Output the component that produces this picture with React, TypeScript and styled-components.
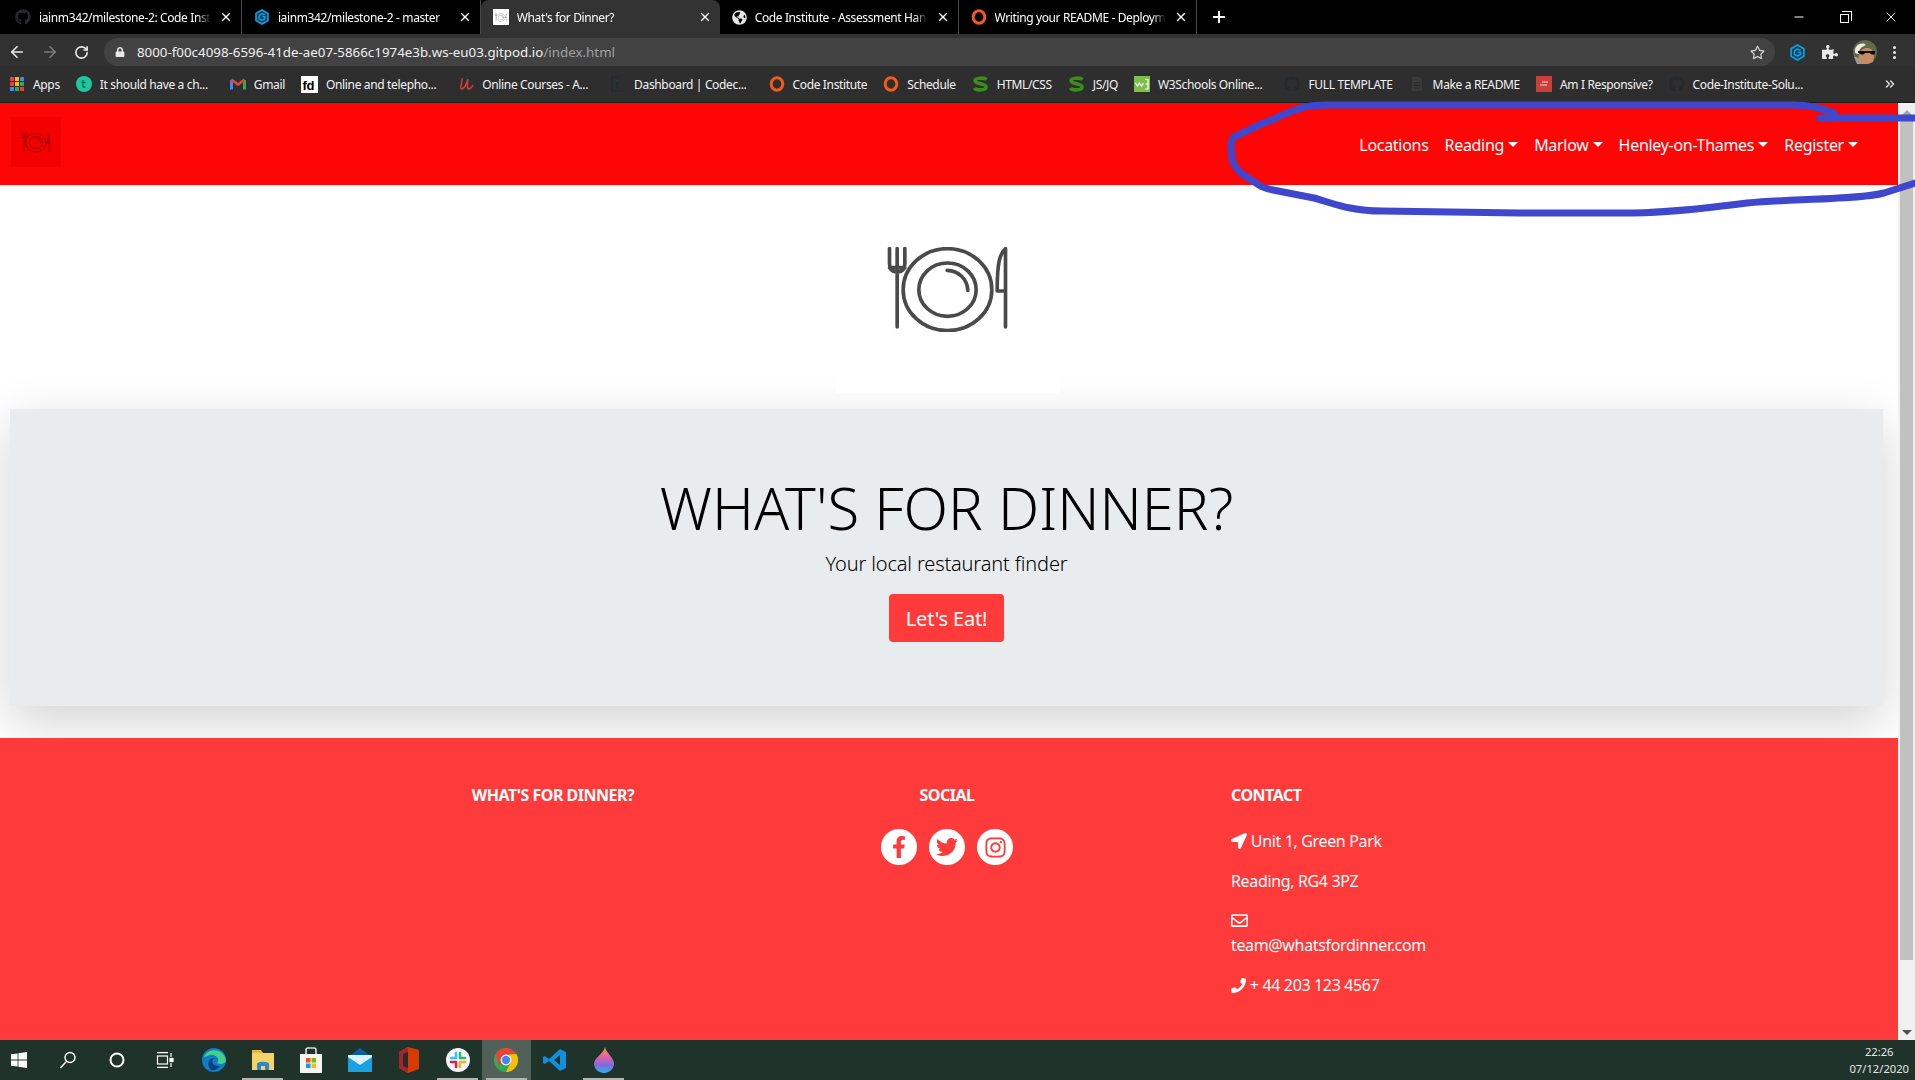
import styled, { createGlobalStyle } from 'styled-components';
import {
  FaFacebookF,
  FaTwitter,
  FaInstagram,
  FaLocationArrow,
  FaRegEnvelope,
  FaPhone,
  FaGithub,
  FaGlobeAmericas,
  FaPuzzlePiece,
  FaLock,
  FaRegStar,
} from 'react-icons/fa';
import { ArrowLeft, ArrowRight, RotateCw, Plus, X, Minus, ChevronsRight } from 'lucide-react';

const GlobalStyle = createGlobalStyle`
  html, body {
    margin: 0;
    height: 1080px;
    overflow: hidden;
    background: #fff;
    font-family: "Noto Sans", "Open Sans", sans-serif;
  }
  * { box-sizing: border-box; }
`;

const PlateIcon = ({ width, height, color }: { width: number; height: number; color: string }) => (
  <svg width={width} height={height} viewBox="140 80 365 255" fill="none" stroke={color} strokeWidth="11" strokeLinecap="round">
    <path d="M147 85V130Q147 155 170 155Q193 155 193 130V85M170 85V320M147 142H193" />
    <ellipse cx="321" cy="208" rx="133" ry="123" />
    <ellipse cx="321" cy="208" rx="86" ry="80" />
    <path d="M320 150C355 152 380 175 382 210" />
    <path d="M495 320V85C478 100 470 125 470 212H495" strokeLinejoin="round" />
  </svg>
);

const GitpodIcon = ({ size }: { size: number }) => (
  <svg width={size} height={size} viewBox="0 0 16 16" fill="none">
    <path d="M8 1L14 4.5V11.5L8 15L2 11.5V4.5Z" fill="#0b3c57" stroke="#12a0e0" strokeWidth="1.6" />
    <path d="M10.8 5.6L7.4 4.8L5 7V9.6L8 11.3L10.8 9.8V7.8H8.2" stroke="#12a0e0" strokeWidth="1.5" />
  </svg>
);

const RingIcon = () => (
  <svg width="16" height="16" viewBox="0 0 16 16" fill="none">
    <ellipse cx="8" cy="8" rx="5.8" ry="6.2" stroke="#f0591f" strokeWidth="3" />
  </svg>
);

const LetterSIcon = () => (
  <svg width="17" height="16" viewBox="0 0 16 16" fill="none">
    <path d="M14 3.6C12 1.6 2.6 1.4 2.6 4.8C2.6 8.4 13.6 7.2 13.6 11C13.6 14.6 3.6 14.6 1.8 12" stroke="#3b8d17" strokeWidth="3.6" />
  </svg>
);

const AppsIcon = () => (
  <svg width="16" height="16" viewBox="0 0 16 16">
    {['#e94235', '#fbbc04', '#4285f4', '#e94235', '#fbbc04', '#34a853', '#4285f4', '#34a853', '#e94235'].map((c, i) => (
      <rect key={i} x={1 + (i % 3) * 5} y={1 + Math.floor(i / 3) * 5} width="4" height="4" fill={c} />
    ))}
  </svg>
);

const GrammarlyIcon = () => (
  <svg width="16" height="16" viewBox="0 0 16 16">
    <circle cx="8" cy="8" r="8" fill="#1fc7a0" />
    <path d="M7 4V10.5Q7 11.5 9.5 11M5.5 6.5H9.5" stroke="#0b6a55" strokeWidth="1.3" fill="none" />
  </svg>
);

const GmailIcon = () => (
  <svg width="16" height="16" viewBox="0 0 16 16" fill="none">
    <path d="M1.5 13.5V4" stroke="#4285f4" strokeWidth="3" />
    <path d="M14.5 13.5V4" stroke="#34a853" strokeWidth="3" />
    <path d="M1.5 3.5L8 8.6L14.5 3.5" stroke="#ea4335" strokeWidth="2.6" />
  </svg>
);

const FdIcon = () => (
  <svg width="17" height="17" viewBox="0 0 17 17">
    <rect width="17" height="17" fill="#fff" />
    <text x="1.5" y="14" fontSize="13" fontWeight="700" fontFamily="Liberation Sans" fill="#000">fd</text>
  </svg>
);

const UdemyIcon = () => (
  <svg width="16" height="16" viewBox="0 0 16 16" fill="none">
    <path d="M4 2C5 6 1 12 3.5 13C6 13.5 9 7 10 3C9 8 9 13 11 13C12.5 13 14 11 15 9" stroke="#c8403f" strokeWidth="1.6" />
  </svg>
);

const CodecademyIcon = () => (
  <svg width="16" height="16" viewBox="0 0 16 16" fill="none">
    <path d="M11 1H2V15H14" stroke="#1c2a38" strokeWidth="1.2" />
    <path d="M10 6.5H7V11H10" stroke="#1c2a38" strokeWidth="1.2" />
  </svg>
);

const W3Icon = () => (
  <svg width="16" height="16" viewBox="0 0 16 16">
    <rect width="16" height="16" fill="#7cbf4a" />
    <path d="M1.5 7L3.5 10L5.5 7L7.5 10L9.5 7" stroke="#fff" strokeWidth="1.2" fill="none" />
    <path d="M11 3.5H14V13H11M11.5 8H14" stroke="#fff" strokeWidth="1.2" fill="none" />
  </svg>
);

const DocIcon = () => (
  <svg width="16" height="16" viewBox="0 0 16 16">
    <path d="M3 1H10L13 4V15H3Z" fill="#3a3a3a" />
    <path d="M5 7H11M5 9.5H11M5 12H11" stroke="#2a2a2a" />
  </svg>
);

const ResponsiveIcon = () => (
  <svg width="16" height="16" viewBox="0 0 16 16">
    <rect width="16" height="16" fill="#c9403a" />
    <path d="M6 6H12M4 9H11" stroke="#f6d0ce" />
  </svg>
);

const AvatarIcon = () => (
  <svg width="24" height="24" viewBox="0 0 24 24">
    <circle cx="12" cy="12" r="12" fill="#5f6b46" />
    <path d="M6 24C4 16 7 8 14 8C21 8 22 16 20 22L15 24Z" fill="#c58a66" />
    <path d="M2 12C1 7 6 2 12 4C14 5 10 6 8 8C6 10 6 12 6 14C3 14 2 13 2 12Z" fill="#ece8df" />
    <path d="M5 11H22V13C22 15 18 15 17 13H12C11 15 7 15 6.5 13H5Z" fill="#0d0d0d" />
    <path d="M1 17C4 16 7 20 8 24H4Z" fill="#9a9a9a" />
  </svg>
);

const WindowsIcon = () => (
  <svg width="16" height="16" viewBox="0 0 16 16" fill="#fff">
    <path d="M0 2.3L6.6 1.4V7.6H0ZM7.4 1.3L16 0V7.6H7.4ZM0 8.4H6.6V14.6L0 13.7ZM7.4 8.4H16V16L7.4 14.7Z" />
  </svg>
);

const SearchGlassIcon = () => (
  <svg width="18" height="18" viewBox="0 0 18 18" fill="none" stroke="#fff" strokeWidth="1.4">
    <circle cx="11" cy="6.5" r="5" />
    <path d="M7.6 10.2L1.4 17" />
  </svg>
);

const CortanaIcon = () => (
  <svg width="16" height="16" viewBox="0 0 16 16" fill="none">
    <circle cx="8" cy="8" r="6.5" stroke="#fff" strokeWidth="2" />
  </svg>
);

const TaskViewIcon = () => (
  <svg width="18" height="16" viewBox="0 0 18 16" fill="none" stroke="#fff" strokeWidth="1.2">
    <path d="M1 .6H12M1 15.4H12" />
    <rect x="1.5" y="4" width="10" height="8" />
    <path d="M15 1V5M15 11V15" />
    <rect x="14" y="6.5" width="3" height="3" fill="#fff" />
  </svg>
);

const EdgeIcon = () => (
  <svg width="24" height="24" viewBox="0 0 24 24">
    <circle cx="12" cy="12" r="12" fill="#0f7ec4" />
    <path d="M2 9C5 0 21 -1 24 12C24 16 18 17 15 15C19 11 13 6 8 7C5 8 3 9 2 9Z" fill="#41d18b" />
    <path d="M9 22C3 16 8 9 13 10C8 12 10 19 18 18C16 21 12 23 9 22Z" fill="#0a3f7d" />
  </svg>
);

const FolderIcon = () => (
  <svg width="24" height="24" viewBox="0 0 24 24">
    <path d="M1 2H10L12 5H23V22H1Z" fill="#e8b33f" />
    <rect x="1" y="5" width="22" height="17" fill="#f6d365" />
    <path d="M6 22V16C6 13 18 13 18 16V22H14V18H10V22Z" fill="#2a87d4" />
  </svg>
);

const StoreIcon = () => (
  <svg width="24" height="26" viewBox="0 0 24 26">
    <path d="M7 7V3Q7 1 9 1H15Q17 1 17 3V7" fill="none" stroke="#ddd" strokeWidth="1.6" />
    <rect x="1" y="7" width="22" height="19" fill="#f5f5f5" />
    <rect x="7" y="11" width="4.5" height="4.5" fill="#f25022" />
    <rect x="12.5" y="11" width="4.5" height="4.5" fill="#7fba00" />
    <rect x="7" y="16.5" width="4.5" height="4.5" fill="#00a4ef" />
    <rect x="12.5" y="16.5" width="4.5" height="4.5" fill="#ffb900" />
  </svg>
);

const MailIcon = () => (
  <svg width="24" height="24" viewBox="0 0 24 24">
    <path d="M0 9L12 0L24 9Z" fill="#0a5ea8" />
    <rect y="9" width="24" height="15" fill="#1ba1e2" />
    <path d="M0 9L12 17L24 9V7H0Z" fill="#d9f1fb" />
  </svg>
);

const OfficeIcon = () => (
  <svg width="20" height="26" viewBox="0 0 20 26">
    <path d="M9 0L20 3V22L9 26L0 21V5Z" fill="#d83b01" />
    <path d="M9 0V26L0 21V5Z" fill="#a4262c" />
    <path d="M4 7L9 5V21L4 19Z" fill="#2a2a2a" />
  </svg>
);

const SlackIcon = () => (
  <svg width="24" height="24" viewBox="0 0 24 24">
    <circle cx="12" cy="12" r="12" fill="#f5f5f5" />
    <path d="M10 5V10M5 10H10" stroke="#36c5f0" strokeWidth="2.6" strokeLinecap="round" />
    <path d="M14 5V10M19 10H14" stroke="#2eb67d" strokeWidth="2.6" strokeLinecap="round" />
    <path d="M14 19V14M19 14H14" stroke="#ecb22e" strokeWidth="2.6" strokeLinecap="round" />
    <path d="M10 19V14M5 14H10" stroke="#e01e5a" strokeWidth="2.6" strokeLinecap="round" />
  </svg>
);

const ChromeIcon = () => (
  <svg width="24" height="24" viewBox="0 0 24 24">
    <circle cx="12" cy="12" r="12" fill="#34a853" />
    <path d="M12 0A12 12 0 0 1 22.4 6H12L5 4Z" fill="#ea4335" />
    <path d="M1.6 6A12 12 0 0 1 12 0L16 8L8 14L5 18Z" fill="#ea4335" />
    <path d="M22.4 6A12 12 0 0 1 12 24L17 14L12 7Z" fill="#fbbc04" />
    <circle cx="12" cy="12" r="5.4" fill="#fff" />
    <circle cx="12" cy="12" r="4.2" fill="#4285f4" />
  </svg>
);

const VsCodeIcon = () => (
  <svg width="24" height="24" viewBox="0 0 24 24">
    <path d="M17 1L23 4V20L17 23L6 13L2 16L0 15V9L2 8L6 11ZM17 7L11 12L17 17Z" fill="#0f8fdc" />
  </svg>
);

const DropIcon = () => (
  <svg width="20" height="26" viewBox="0 0 20 26">
    <defs>
      <linearGradient id="dropFill" x1="0" y1="0" x2="0" y2="1">
        <stop offset="0" stopColor="#f6a13a" />
        <stop offset="0.4" stopColor="#dc5fae" />
        <stop offset="0.7" stopColor="#7d6ce0" />
        <stop offset="1" stopColor="#2bb3ea" />
      </linearGradient>
    </defs>
    <path d="M11 0C12 6 20 10 20 17C20 22 15 26 10 26C5 26 0 22 0 17C0 10 9 8 11 0Z" fill="url(#dropFill)" />
  </svg>
);

const TabFavicon = styled.span`
  width: 16px;
  height: 16px;
  flex: none;
  display: flex;
  align-items: center;
  justify-content: center;
  background: #fff;
`;

const tabs = [
  { title: 'iainm342/milestone-2: Code Insti', icon: <FaGithub size={16} color="#24292e" /> },
  { title: 'iainm342/milestone-2 - master', icon: <GitpodIcon size={16} /> },
  { title: "What's for Dinner?", icon: <TabFavicon><PlateIcon width={12} height={9} color="#888" /></TabFavicon>, active: true },
  { title: 'Code Institute - Assessment Han', icon: <FaGlobeAmericas size={15} color="#e8e8e8" /> },
  { title: 'Writing your README - Deploym', icon: <RingIcon /> },
];

const bookmarks = [
  { label: 'Apps', icon: <AppsIcon /> },
  { label: 'It should have a ch...', icon: <GrammarlyIcon />, clipped: true },
  { label: 'Gmail', icon: <GmailIcon /> },
  { label: 'Online and telepho...', icon: <FdIcon />, clipped: true },
  { label: 'Online Courses - A...', icon: <UdemyIcon />, clipped: true },
  { label: 'Dashboard | Codec...', icon: <CodecademyIcon />, clipped: true },
  { label: 'Code Institute', icon: <RingIcon /> },
  { label: 'Schedule', icon: <RingIcon /> },
  { label: 'HTML/CSS', icon: <LetterSIcon /> },
  { label: 'JS/JQ', icon: <LetterSIcon /> },
  { label: 'W3Schools Online...', icon: <W3Icon />, clipped: true },
  { label: 'FULL TEMPLATE', icon: <FaGithub size={16} color="#24292e" /> },
  { label: 'Make a README', icon: <DocIcon /> },
  { label: 'Am I Responsive?', icon: <ResponsiveIcon /> },
  { label: 'Code-Institute-Solu...', icon: <FaGithub size={16} color="#24292e" />, clipped: true },
];

const navLinks = [
  { label: 'Locations' },
  { label: 'Reading', caret: true },
  { label: 'Marlow', caret: true },
  { label: 'Henley-on-Thames', caret: true },
  { label: 'Register', caret: true },
];

const taskbarApps = [
  { icon: <EdgeIcon /> },
  { icon: <FolderIcon />, open: true },
  { icon: <StoreIcon /> },
  { icon: <MailIcon /> },
  { icon: <OfficeIcon /> },
  { icon: <SlackIcon />, open: true },
  { icon: <ChromeIcon />, open: true, current: true },
  { icon: <VsCodeIcon /> },
  { icon: <DropIcon />, open: true },
];

export default function App() {
  return (
    <>
      <GlobalStyle />
      <Screen>
        <TabStrip>
          {tabs.map((tab) => (
            <Tab key={tab.title} $active={tab.active}>
              {tab.icon}
              <TabTitle>{tab.title}</TabTitle>
              <X size={14} color="#fff" strokeWidth={2.4} />
            </Tab>
          ))}
          <NewTab>
            <Plus size={18} color="#fff" strokeWidth={2.6} />
          </NewTab>
          <WindowControls>
            <Minus size={14} color="#fff" />
            <RestoreGlyph />
            <X size={16} color="#fff" strokeWidth={1.4} />
          </WindowControls>
        </TabStrip>

        <Toolbar>
          <ToolbarNav>
            <ArrowLeft size={18} color="#e8e8e8" strokeWidth={2.2} />
            <ArrowRight size={18} color="#7c7c7c" strokeWidth={2.2} />
            <RotateCw size={15} color="#e8e8e8" strokeWidth={2.6} />
          </ToolbarNav>
          <Omnibox>
            <FaLock size={10} color="#e8e8e8" />
            <Url>
              8000-f00c4098-6596-41de-ae07-5866c1974e3b.ws-eu03.gitpod.io<UrlPath>/index.html</UrlPath>
            </Url>
            <FaRegStar size={15} color="#d0d0d0" />
          </Omnibox>
          <Extensions>
            <GitpodIcon size={17} />
            <FaPuzzlePiece size={16} color="#e8e8e8" />
            <AvatarIcon />
            <MenuDots />
          </Extensions>
        </Toolbar>

        <BookmarksBar>
          {bookmarks.map((bookmark) => (
            <Bookmark key={bookmark.label} $clipped={bookmark.clipped}>
              {bookmark.icon}
              <span>{bookmark.label}</span>
            </Bookmark>
          ))}
          <BookmarksMore>
            <ChevronsRight size={14} color="#ddd" strokeWidth={2.6} />
          </BookmarksMore>
        </BookmarksBar>

        <Viewport>
          <Page>
            <Navbar>
              <NavLogo>
                <PlateIcon width={28} height={21} color="#8d0000" />
              </NavLogo>
              <NavList>
                {navLinks.map((link) => (
                  <NavLink key={link.label} $caret={link.caret}>
                    {link.label}
                  </NavLink>
                ))}
              </NavList>
            </Navbar>

            <LogoBand>
              <LogoTile>
                <PlateIcon width={122} height={85} color="#4a4a4a" />
              </LogoTile>
            </LogoBand>

            <Jumbotron>
              <Title>WHAT'S FOR DINNER?</Title>
              <Lead>Your local restaurant finder</Lead>
              <EatButton>Let's Eat!</EatButton>
            </Jumbotron>

            <Footer>
              <FooterGrid>
                <FooterColumn>
                  <FooterHeading>WHAT'S FOR DINNER?</FooterHeading>
                </FooterColumn>
                <FooterColumn>
                  <FooterHeading>SOCIAL</FooterHeading>
                  <SocialRow>
                    <SocialLink><FaFacebookF size={22} /></SocialLink>
                    <SocialLink><FaTwitter size={22} /></SocialLink>
                    <SocialLink><FaInstagram size={23} /></SocialLink>
                  </SocialRow>
                </FooterColumn>
                <ContactColumn>
                  <FooterHeading>CONTACT</FooterHeading>
                  <ContactLine><FaLocationArrow size={16} /> Unit 1, Green Park</ContactLine>
                  <ContactLine>Reading, RG4 3PZ</ContactLine>
                  <ContactLine>
                    <FaRegEnvelope size={17} />
                    <br />
                    team@whatsfordinner.com
                  </ContactLine>
                  <ContactLine><FaPhone size={15} /> + 44 203 123 4567</ContactLine>
                </ContactColumn>
              </FooterGrid>
            </Footer>
          </Page>

          <Scrollbar>
            <ScrollArrow $up />
            <ScrollThumb />
            <ScrollArrow />
          </Scrollbar>
        </Viewport>

        <Taskbar>
          <TaskbarSlot><WindowsIcon /></TaskbarSlot>
          <TaskbarSlot><SearchGlassIcon /></TaskbarSlot>
          <TaskbarSlot><CortanaIcon /></TaskbarSlot>
          <TaskbarSlot><TaskViewIcon /></TaskbarSlot>
          {taskbarApps.map((app, i) => (
            <TaskbarSlot key={i} $open={app.open} $current={app.current}>
              {app.icon}
            </TaskbarSlot>
          ))}
          <Clock>
            <span>22:26</span>
            <span>07/12/2020</span>
          </Clock>
        </Taskbar>

        <PenScribble viewBox="0 0 1915 1080" fill="none" stroke="#3f48cc" strokeWidth="7" strokeLinecap="round" strokeLinejoin="round">
          <path d="M1834 113C1820 108 1810 105 1793 105L1328 105C1318 105 1312 105 1305 107C1295 110 1288 112 1278 117C1270 122 1266 121 1259 125L1234 137C1231 140 1231 143 1231 146C1232 152 1231 158 1233 162C1235 167 1238 170 1241 173L1259 185C1263 188 1268 189 1273 190L1314 198C1325 201 1338 206 1350 208C1360 210 1370 211 1382 211L1519 213L1633 213C1680 212 1715 207 1747 203C1780 200 1810 200 1838 198C1860 197 1872 196 1884 193L1915 183" />
          <path d="M1820 118H1915" />
        </PenScribble>
      </Screen>
    </>
  );
}

const Screen = styled.div`
  position: relative;
  width: 1915px;
  height: 1080px;
  display: flex;
  flex-direction: column;
  overflow: hidden;
`;

const TabStrip = styled.div`
  height: 34px;
  flex: none;
  display: flex;
  align-items: stretch;
  padding-left: 3px;
  background: #000;
`;

const Tab = styled.div<{ $active?: boolean }>`
  position: relative;
  width: 238.9px;
  display: flex;
  align-items: center;
  gap: 8px;
  padding: 0 8px 0 12px;
  font-size: 12px;
  letter-spacing: -0.38px;
  color: #fff;
  background: ${(p) => (p.$active ? '#333' : 'transparent')};
  border-radius: ${(p) => (p.$active ? '8px 8px 0 0' : '0')};
  border-right: ${(p) => (p.$active ? 'none' : '1px solid #4a4a4a')};
  background-clip: padding-box;
`;

const TabTitle = styled.span`
  flex: 1;
  min-width: 0;
  white-space: nowrap;
  overflow: hidden;
  mask-image: linear-gradient(90deg, #000 92%, transparent);
`;

const NewTab = styled.div`
  width: 44px;
  display: flex;
  align-items: center;
  justify-content: center;
`;

const WindowControls = styled.div`
  margin-left: auto;
  width: 123px;
  padding-right: 16px;
  display: flex;
  align-items: center;
  justify-content: space-between;
`;

const RestoreGlyph = styled.span`
  position: relative;
  width: 9px;
  height: 9px;
  border: 1px solid #fff;
  margin-top: 2px;

  &::after {
    content: '';
    position: absolute;
    top: -4px;
    right: -4px;
    width: 9px;
    height: 9px;
    border-top: 1px solid #fff;
    border-right: 1px solid #fff;
  }
`;

const Toolbar = styled.div`
  height: 32px;
  flex: none;
  display: flex;
  align-items: flex-end;
  padding-top: 4px;
  background: #323232;
`;

const ToolbarNav = styled.div`
  width: 104px;
  height: 28px;
  padding: 0 15px 0 8px;
  display: flex;
  align-items: center;
  justify-content: space-between;
`;

const Omnibox = styled.div`
  width: 1671px;
  height: 28px;
  display: flex;
  align-items: center;
  gap: 12px;
  padding: 0 10px 0 11px;
  background: #424242;
  border-radius: 14px;

  & > svg:last-child {
    margin-left: auto;
  }
`;

const Url = styled.span`
  font-size: 13.33px;
  color: #f0f0f0;
  white-space: nowrap;
`;

const UrlPath = styled.span`
  color: #a0a0a0;
`;

const Extensions = styled.div`
  flex: 1;
  height: 28px;
  display: flex;
  align-items: center;
  justify-content: space-between;
  padding: 0 19px 0 14px;
`;

const MenuDots = styled.span`
  width: 3px;
  height: 3px;
  border-radius: 50%;
  background: #e8e8e8;
  box-shadow: 0 -5px 0 #e8e8e8, 0 5px 0 #e8e8e8;
`;

const BookmarksBar = styled.div`
  position: relative;
  height: 37px;
  flex: none;
  display: flex;
  align-items: center;
  gap: 16px;
  padding: 0 8px 0 9px;
  background: #2e2e2e;
  border-bottom: 1px solid #1c1c1c;
`;

const Bookmark = styled.div<{ $clipped?: boolean }>`
  display: flex;
  align-items: center;
  gap: 8px;
  flex: none;
  padding-right: ${(p) => (p.$clipped ? '6px' : '0')};
  font-size: 12px;
  letter-spacing: -0.35px;
  color: #f2f2f2;
  white-space: nowrap;
`;

const BookmarksMore = styled.div`
  margin-left: auto;
  display: flex;
  padding-right: 10px;
`;

const Viewport = styled.div`
  flex: 1;
  min-height: 0;
  display: flex;
`;

const Page = styled.main`
  flex: 1;
  min-width: 0;
  display: flex;
  flex-direction: column;
  background: #fff;
`;

const Navbar = styled.nav`
  height: 82px;
  flex: none;
  display: flex;
  align-items: center;
  justify-content: space-between;
  padding: 0 32px 0 11px;
  background: #fe0606;
`;

const NavLogo = styled.div`
  width: 50px;
  height: 50px;
  margin-top: -4px;
  display: flex;
  align-items: center;
  justify-content: center;
  background: #f50000;
`;

const NavList = styled.ul`
  display: flex;
  margin: 0;
  padding: 1px 0 0;
  list-style: none;
`;

const NavLink = styled.li<{ $caret?: boolean }>`
  padding: 8px;
  font-size: 16px;
  line-height: 24px;
  letter-spacing: -0.3px;
  color: #fff;
  white-space: nowrap;

  &::after {
    content: '';
    display: ${(p) => (p.$caret ? 'inline-block' : 'none')};
    margin-left: 0.255em;
    vertical-align: 0.2em;
    border-top: 0.34em solid #fff;
    border-right: 0.34em solid transparent;
    border-left: 0.34em solid transparent;
  }
`;

const LogoBand = styled.div`
  display: flex;
  justify-content: center;
  padding-right: 3px;
  margin-bottom: 16px;
`;

const LogoTile = styled.div`
  position: relative;
  z-index: 1;
  width: 224px;
  height: 208px;
  display: flex;
  align-items: center;
  justify-content: center;
  background: #fff;
`;

const Jumbotron = styled.section`
  height: 297px;
  margin: 0 15px 32px 10px;
  padding: 64px 32px;
  display: flex;
  flex-direction: column;
  align-items: center;
  background: #e9ecef;
  box-shadow: 0 1rem 3rem rgba(0, 0, 0, 0.175);
`;

const Title = styled.h1`
  margin: 0 0 8px;
  font-size: 58px;
  font-weight: 300;
  line-height: 67px;
  color: #000;
  position: relative;
  top: 1px;
`;

const Lead = styled.p`
  margin: 1px 0 15px;
  font-size: 20px;
  font-weight: 300;
  line-height: 30px;
  letter-spacing: -0.15px;
  color: #000;
`;

const EatButton = styled.button`
  height: 48px;
  width: 115px;
  padding: 1px 0 0;
  border: 0;
  border-radius: 4px;
  font-family: inherit;
  font-size: 20px;
  letter-spacing: -0.15px;
  color: #fff;
  background: #ff3a3a;
`;

const Footer = styled.footer`
  flex: 1;
  padding: 45px 4px 0 0;
  background: #ff3a3a;
  color: #fff;
`;

const FooterGrid = styled.div`
  width: 1182px;
  margin: 0 auto;
  display: grid;
  grid-template-columns: repeat(3, 394px);
`;

const FooterColumn = styled.div`
  text-align: center;
`;

const ContactColumn = styled.div`
  padding-left: 87px;
`;

const FooterHeading = styled.h5`
  margin: 0 0 22px;
  font-size: 16px;
  font-weight: 700;
  line-height: 24px;
  letter-spacing: -0.5px;
`;

const SocialRow = styled.div`
  display: flex;
  justify-content: center;
  gap: 12px;
`;

const SocialLink = styled.a`
  width: 36px;
  height: 36px;
  display: flex;
  align-items: center;
  justify-content: center;
  border-radius: 50%;
  background: #fff;
  color: #ff3a3a;
`;

const ContactLine = styled.p`
  margin: 0 0 16px;
  font-size: 16px;
  line-height: 24px;
  letter-spacing: -0.35px;

  svg {
    vertical-align: -2px;
  }
`;

const Scrollbar = styled.aside`
  width: 17px;
  flex: none;
  display: flex;
  flex-direction: column;
  align-items: center;
  background: #f1f1f1;
`;

const ScrollArrow = styled.span<{ $up?: boolean }>`
  flex: none;
  margin: ${(p) => (p.$up ? '7px 0 0' : 'auto 0 5px')};
  width: 0;
  height: 0;
  border-left: 5px solid transparent;
  border-right: 5px solid transparent;
  border-bottom: ${(p) => (p.$up ? '5px solid #a3a3a3' : 'none')};
  border-top: ${(p) => (p.$up ? 'none' : '5px solid #505050')};
`;

const ScrollThumb = styled.div`
  width: 13px;
  height: 839px;
  margin-top: 6px;
  background: #c1c1c1;
`;

const Taskbar = styled.div`
  height: 40px;
  flex: none;
  display: flex;
  align-items: stretch;
  background: #20332a;
`;

const TaskbarSlot = styled.div<{ $open?: boolean; $current?: boolean }>`
  position: relative;
  width: 48.7px;
  display: flex;
  align-items: center;
  justify-content: center;
  background: ${(p) => (p.$current ? '#4f6158' : 'transparent')};

  &:first-child {
    margin-left: -5px;
  }

  &::after {
    content: '';
    display: ${(p) => (p.$open ? 'block' : 'none')};
    position: absolute;
    left: 4px;
    right: 4px;
    bottom: 0;
    height: 2px;
    background: #aeb6b2;
  }
`;

const Clock = styled.div`
  margin-left: auto;
  padding-right: 6px;
  display: flex;
  flex-direction: column;
  align-items: center;
  justify-content: center;
  font-size: 11.2px;
  line-height: 17px;
  color: #e6e6e6;
`;

const PenScribble = styled.svg`
  position: absolute;
  inset: 0;
  width: 1915px;
  height: 1080px;
  pointer-events: none;
  z-index: 5;
`;
